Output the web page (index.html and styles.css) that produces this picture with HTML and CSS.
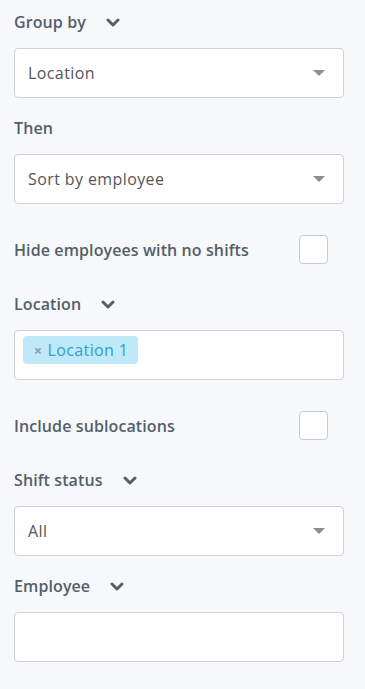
FILE: index.html
```html
<!DOCTYPE html>
<html lang="en">
<head>
    <meta charset="UTF-8">
    <meta name="viewport" content="width=device-width, initial-scale=1.0">
    <title>Report Filters</title>
    <link rel="stylesheet" href="styles.css">
</head>
<body>

    <div class="filters">
        <div class="field-label">
            <span>Group by</span>
            <svg class="chevron" viewBox="0 0 14 9"><path d="M2 2 L7 7 L12 2"/></svg>
        </div>
        <div class="select-box">
            <span>Location</span>
            <span class="caret"></span>
        </div>

        <div class="field-label then-label">
            <span>Then</span>
        </div>
        <div class="select-box">
            <span>Sort by employee</span>
            <span class="caret"></span>
        </div>

        <div class="check-row hide-row">
            <span>Hide employees with no shifts</span>
            <span class="checkbox"></span>
        </div>

        <div class="field-label after-check">
            <span>Location</span>
            <svg class="chevron" viewBox="0 0 14 9"><path d="M2 2 L7 7 L12 2"/></svg>
        </div>
        <div class="multi-box">
            <span class="tag"><span class="tag-x">&times;</span>Location 1</span>
        </div>

        <div class="check-row">
            <span>Include sublocations</span>
            <span class="checkbox"></span>
        </div>

        <div class="field-label after-check">
            <span>Shift status</span>
            <svg class="chevron" viewBox="0 0 14 9"><path d="M2 2 L7 7 L12 2"/></svg>
        </div>
        <div class="select-box">
            <span>All</span>
            <span class="caret"></span>
        </div>

        <div class="field-label then-label">
            <span>Employee</span>
            <svg class="chevron" viewBox="0 0 14 9"><path d="M2 2 L7 7 L12 2"/></svg>
        </div>
        <div class="text-box"></div>
    </div>

</body>
</html>
```

FILE: styles.css
```css
body {
    margin: 0;
    background-color: #f7f8fa;
    font-family: "Open Sans", "Liberation Sans", sans-serif;
}
.filters {
    display: flex;
    flex-direction: column;
    width: 330px;
    padding: 8px 0 0 14px;
}
.field-label {
    display: flex;
    align-items: center;
    height: 28px;
    margin-bottom: 12px;
    font-size: 16px;
    font-weight: 600;
    letter-spacing: 0.1px;
    color: #545f69;
}
.then-label {
    margin-top: 16px;
}
.after-check {
    margin-top: 26px;
}
.chevron {
    width: 14px;
    height: 9px;
    margin-left: 20px;
    fill: none;
    stroke: #545f69;
    stroke-width: 3;
    stroke-linecap: round;
    stroke-linejoin: round;
}
.select-box, .text-box, .multi-box {
    box-sizing: border-box;
    height: 50px;
    background: #fff;
    border: 1px solid #cfd1d3;
    border-radius: 4px;
}
.select-box {
    display: flex;
    align-items: center;
    justify-content: space-between;
    padding: 0 18px 0 13px;
    font-size: 16px;
    letter-spacing: 0.4px;
    color: #555;
}
.caret {
    width: 0;
    height: 0;
    border-left: 6px solid transparent;
    border-right: 6px solid transparent;
    border-top: 6px solid #8e8e8e;
}
.check-row {
    display: flex;
    align-items: center;
    justify-content: space-between;
    height: 29px;
    margin-top: 31px;
    padding-right: 16px;
    font-size: 16px;
    font-weight: 600;
    letter-spacing: 0.1px;
    color: #545f69;
}
.checkbox {
    box-sizing: border-box;
    width: 29px;
    height: 29px;
    background: #fff;
    border: 1px solid #c3ccd5;
    border-radius: 4px;
}
.multi-box {
    display: flex;
    align-items: flex-start;
    padding: 5px 8px;
}
.tag {
    display: flex;
    align-items: center;
    height: 28px;
    padding: 0 10px 0 11px;
    background: #bfe8f8;
    border-radius: 4px;
    font-size: 16px;
    letter-spacing: 0.4px;
    color: #2e9fd2;
}
.tag-x {
    margin-right: 5px;
    font-size: 14px;
    font-weight: 700;
    color: #8d9aa3;
}
```
